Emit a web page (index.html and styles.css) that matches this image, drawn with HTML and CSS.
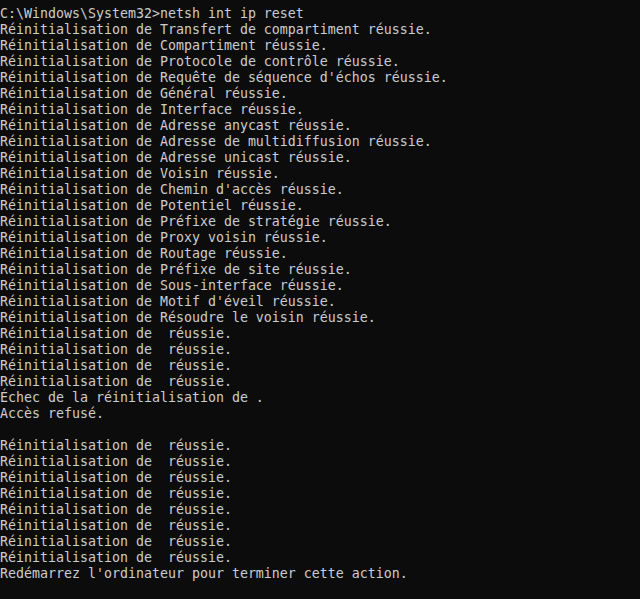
FILE: index.html
```html
<!DOCTYPE html>
<html lang="fr">
<head>
<meta charset="utf-8">
<link rel="stylesheet" href="styles.css">
</head>
<body>
<pre class="console">C:\Windows\System32&gt;netsh int ip reset
Réinitialisation de Transfert de compartiment réussie.
Réinitialisation de Compartiment réussie.
Réinitialisation de Protocole de contrôle réussie.
Réinitialisation de Requête de séquence d'échos réussie.
Réinitialisation de Général réussie.
Réinitialisation de Interface réussie.
Réinitialisation de Adresse anycast réussie.
Réinitialisation de Adresse de multidiffusion réussie.
Réinitialisation de Adresse unicast réussie.
Réinitialisation de Voisin réussie.
Réinitialisation de Chemin d'accès réussie.
Réinitialisation de Potentiel réussie.
Réinitialisation de Préfixe de stratégie réussie.
Réinitialisation de Proxy voisin réussie.
Réinitialisation de Routage réussie.
Réinitialisation de Préfixe de site réussie.
Réinitialisation de Sous-interface réussie.
Réinitialisation de Motif d'éveil réussie.
Réinitialisation de Résoudre le voisin réussie.
Réinitialisation de  réussie.
Réinitialisation de  réussie.
Réinitialisation de  réussie.
Réinitialisation de  réussie.
Échec de la réinitialisation de .
Accès refusé.

Réinitialisation de  réussie.
Réinitialisation de  réussie.
Réinitialisation de  réussie.
Réinitialisation de  réussie.
Réinitialisation de  réussie.
Réinitialisation de  réussie.
Réinitialisation de  réussie.
Réinitialisation de  réussie.
Redémarrez l'ordinateur pour terminer cette action.</pre>
</body>
</html>
```
FILE: styles.css
```css
html, body {
  margin: 0;
  padding: 0;
  background: #0c0c0c;
  height: 100%;
}
.console {
  margin: 0;
  padding: 6px 0 0 0;
  font-family: "DejaVu Sans Mono", "Liberation Mono", monospace;
  font-size: 13.29px;
  line-height: 16px;
  color: #cccccc;
  white-space: pre;
}
```
